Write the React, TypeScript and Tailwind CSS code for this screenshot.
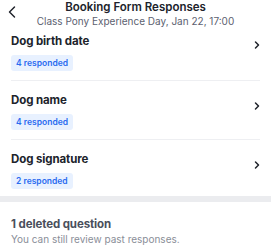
import { ChevronLeft, ChevronRight } from 'lucide-react';

interface IQuestion {
  id: string,
  label: string,
  responded: number
}

const questions: IQuestion[] = [
  { id: 'birth', label: 'Dog birth date', responded: 4 },
  { id: 'name', label: 'Dog name', responded: 4 },
  { id: 'signature', label: 'Dog signature', responded: 2 },
];

export default function App() {
  return (
    <div className="w-[271px] h-[250px] overflow-hidden bg-white font-['Inter',sans-serif] text-[#20232b]">
      {/* Header */}
      <div className="relative h-[30px] flex flex-col items-center">
        <button className="absolute left-[2px] top-[2px] text-[#20232b]">
          <ChevronLeft size={20} strokeWidth={1.75} />
        </button>
        <div className="text-[11.5px] leading-[14px] font-semibold">Booking Form Responses</div>
        <div className="mt-[1px] text-[10px] leading-[13px] text-[#5c6170]">Class Pony Experience Day, Jan 22, 17:00</div>
      </div>
      {/* Questions */}
      <div className="flex flex-col px-[11px]">
        {questions.map(({ id, label, responded }, i) => (
          <div
            key={`question-${id}`}
            className={`flex flex-row items-center justify-between ${i < questions.length - 1 ? 'border-b border-[#eeeff2] pb-[9px]' : 'pb-[7px]'}`}
          >
            <div className={`flex flex-col items-start ${i === 0 ? 'pt-[2px]' : 'pt-[10px]'}`}>
              <div className="text-[11.5px] leading-[18px] font-bold tracking-[-0.1px]">{label}</div>
              <div className="mt-[5px] h-[16px] px-[5px] flex items-center rounded-[3px] bg-[#e8f1ff] text-[#2a6bf0] text-[8.5px] font-semibold">
                {responded} responded
              </div>
            </div>
            <ChevronRight size={12} strokeWidth={3} className={`-mr-[3px] text-[#20232b] ${i === 0 ? 'mb-[12px]' : ''}`} />
          </div>
        ))}
      </div>
      <div className="h-[6px] bg-[#ebecef]" />
      {/* Deleted */}
      <div className="px-[11px] pt-[14px] flex flex-col">
        <div className="text-[11.5px] leading-[16px] font-bold tracking-[-0.1px] text-[#4a4f5c]">1 deleted question</div>
        <div className="text-[10px] leading-[14px] text-[#8a8e98]">You can still review past responses.</div>
      </div>
    </div>
  );
}
